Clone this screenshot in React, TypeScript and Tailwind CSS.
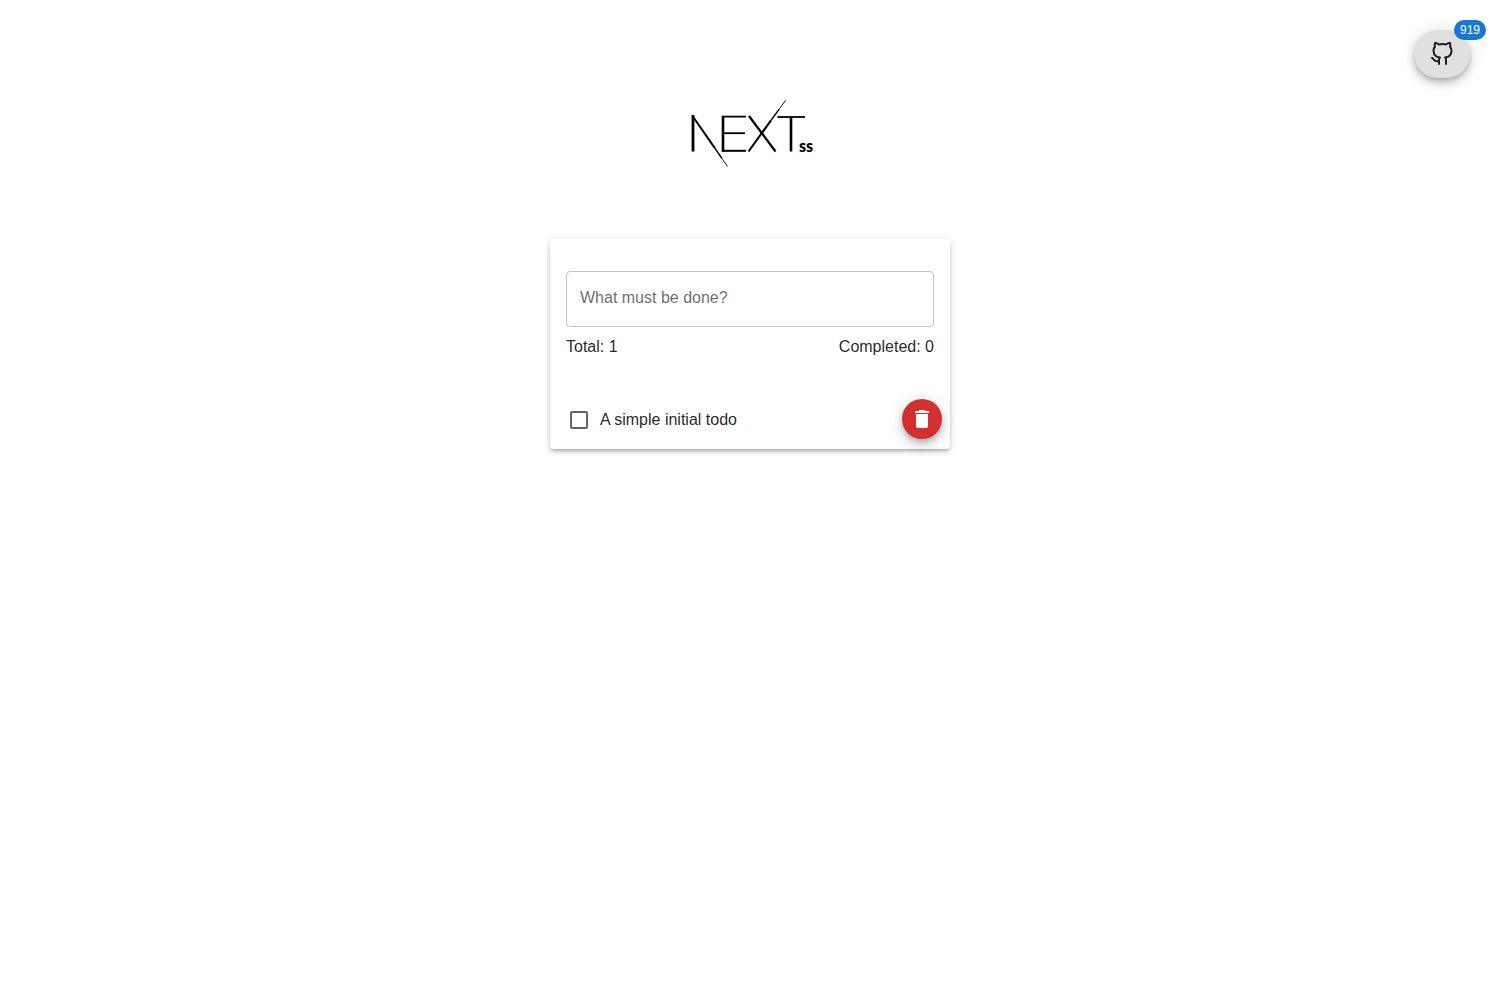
import { useState } from "react";

function Logo() {
  return (
    <svg
      width="130"
      height="72"
      viewBox="0 0 130 72"
      role="img"
      aria-label="NEXTss"
      fill="none"
      stroke="#000"
      strokeLinecap="butt"
    >
      <line x1="8" y1="18" x2="8" y2="54.5" strokeWidth="2.8" />
      <line x1="7.5" y1="19" x2="30" y2="51.4" strokeWidth="2" />
      <line x1="30" y1="51.4" x2="37" y2="61.5" strokeWidth="1.5" />
      <line x1="37" y1="61.5" x2="42.5" y2="69.5" strokeWidth="0.9" />
      <line x1="38" y1="19" x2="38" y2="55" strokeWidth="2.6" />
      <line x1="37" y1="19.6" x2="61" y2="19.6" strokeWidth="1.8" />
      <line x1="38" y1="36.2" x2="60" y2="36.2" strokeWidth="1.8" />
      <line x1="37" y1="53.8" x2="61" y2="53.8" strokeWidth="2" />
      <line x1="64" y1="19" x2="90.5" y2="54.5" strokeWidth="2.2" />
      <line x1="63.5" y1="54.5" x2="86" y2="23.4" strokeWidth="2.1" />
      <line x1="86" y1="23.4" x2="94" y2="12.4" strokeWidth="1.5" />
      <line x1="94" y1="12.4" x2="100.5" y2="3.4" strokeWidth="0.9" />
      <line x1="92.5" y1="20" x2="120" y2="20" strokeWidth="1.8" />
      <line x1="106" y1="20" x2="106" y2="54.5" strokeWidth="2.6" />
      <text
        x="114"
        y="55"
        fill="#000"
        stroke="none"
        className="font-['Lato',sans-serif] text-[16px] font-black"
      >
        ss
      </text>
    </svg>
  );
}

function GithubIcon() {
  return (
    <svg
      width="24"
      height="24"
      viewBox="0 0 24 24"
      fill="none"
      stroke="currentColor"
      strokeWidth="2"
      strokeLinecap="round"
      strokeLinejoin="round"
      aria-hidden="true"
    >
      <path d="M9 19c-5 1.5-5-2.5-7-3m14 6v-3.87a3.37 3.37 0 0 0-.94-2.61c3.14-.35 6.44-1.54 6.44-7A5.44 5.44 0 0 0 20 4.77 5.07 5.07 0 0 0 19.91 1S18.73.65 16 2.48a13.38 13.38 0 0 0-7 0C6.27.65 5.09 1 5.09 1A5.07 5.07 0 0 0 5 4.77a5.44 5.44 0 0 0-1.5 3.78c0 5.42 3.3 6.61 6.44 7A3.37 3.37 0 0 0 9 18.13V22" />
    </svg>
  );
}

function TrashIcon() {
  return (
    <svg width="24" height="24" viewBox="0 0 24 24" fill="currentColor" aria-hidden="true">
      <path d="M6 19c0 1.1.9 2 2 2h8c1.1 0 2-.9 2-2V7H6v12zM19 4h-3.5l-1-1h-5l-1 1H5v2h14V4z" />
    </svg>
  );
}

type Todo = { id: number; text: string; done: boolean };

export default function App() {
  const [draft, setDraft] = useState("");
  const [todos, setTodos] = useState<Todo[]>([
    { id: 1, text: "A simple initial todo", done: false },
  ]);

  const add = () => {
    if (!draft.trim()) return;
    setTodos([...todos, { id: Date.now(), text: draft.trim(), done: false }]);
    setDraft("");
  };

  return (
    <div className="relative min-h-screen bg-white font-['Liberation_Sans',Arial,sans-serif] text-base text-black/87">
      <a
        href="#github"
        aria-label="GitHub, 919 stars"
        className="absolute top-[30px] right-[30px] flex h-12 w-14 items-center justify-center rounded-3xl bg-[#e0e0e0] shadow-[0_3px_5px_-1px_rgba(0,0,0,0.2),0_6px_10px_0_rgba(0,0,0,0.14),0_1px_18px_0_rgba(0,0,0,0.12)]"
      >
        <GithubIcon />
        <span className="absolute -top-[10px] -right-4 flex h-5 w-8 items-center justify-center rounded-full bg-[#1976d2] text-xs text-white">
          919
        </span>
      </a>

      <main className="flex flex-col items-center px-4 pt-[97px]">
        <h1>
          <Logo />
        </h1>

        <section className="mt-[70px] w-full max-w-[400px] rounded bg-white pt-8 shadow-[0_3px_3px_-2px_rgba(0,0,0,0.2),0_3px_4px_0_rgba(0,0,0,0.14),0_1px_8px_0_rgba(0,0,0,0.12)]">
          <form
            className="px-4"
            onSubmit={(e) => {
              e.preventDefault();
              add();
            }}
          >
            <input
              aria-label="What must be done?"
              placeholder="What must be done?"
              value={draft}
              onChange={(e) => setDraft(e.target.value)}
              className="block h-14 w-full rounded border border-black/23 px-[13px] pb-0.5 placeholder:text-black/60"
            />
            <div className="mt-2 flex justify-between leading-6">
              <span>Total: {todos.length}</span>
              <span>Completed: {todos.filter((t) => t.done).length}</span>
            </div>
          </form>

          <ul className="mt-[30px]">
            {todos.map((todo) => (
              <li key={todo.id} className="flex h-15 items-center justify-between pr-2 pl-5">
                <label className="flex items-center gap-3 pt-0.5">
                  <input
                    type="checkbox"
                    checked={todo.done}
                    onChange={() =>
                      setTodos(todos.map((t) => (t.id === todo.id ? { ...t, done: !t.done } : t)))
                    }
                    className="size-[18px] appearance-none rounded-xs border-2 border-black/60 checked:border-[#1976d2] checked:bg-[#1976d2]"
                  />
                  <span>{todo.text}</span>
                </label>
                <button
                  type="button"
                  aria-label={`Delete ${todo.text}`}
                  onClick={() => setTodos(todos.filter((t) => t.id !== todo.id))}
                  className="flex size-10 items-center justify-center rounded-full bg-[#d32f2f] text-white shadow-[0_3px_5px_-1px_rgba(0,0,0,0.2),0_6px_10px_0_rgba(0,0,0,0.14),0_1px_18px_0_rgba(0,0,0,0.12)]"
                >
                  <TrashIcon />
                </button>
              </li>
            ))}
          </ul>
        </section>
      </main>
    </div>
  );
}
